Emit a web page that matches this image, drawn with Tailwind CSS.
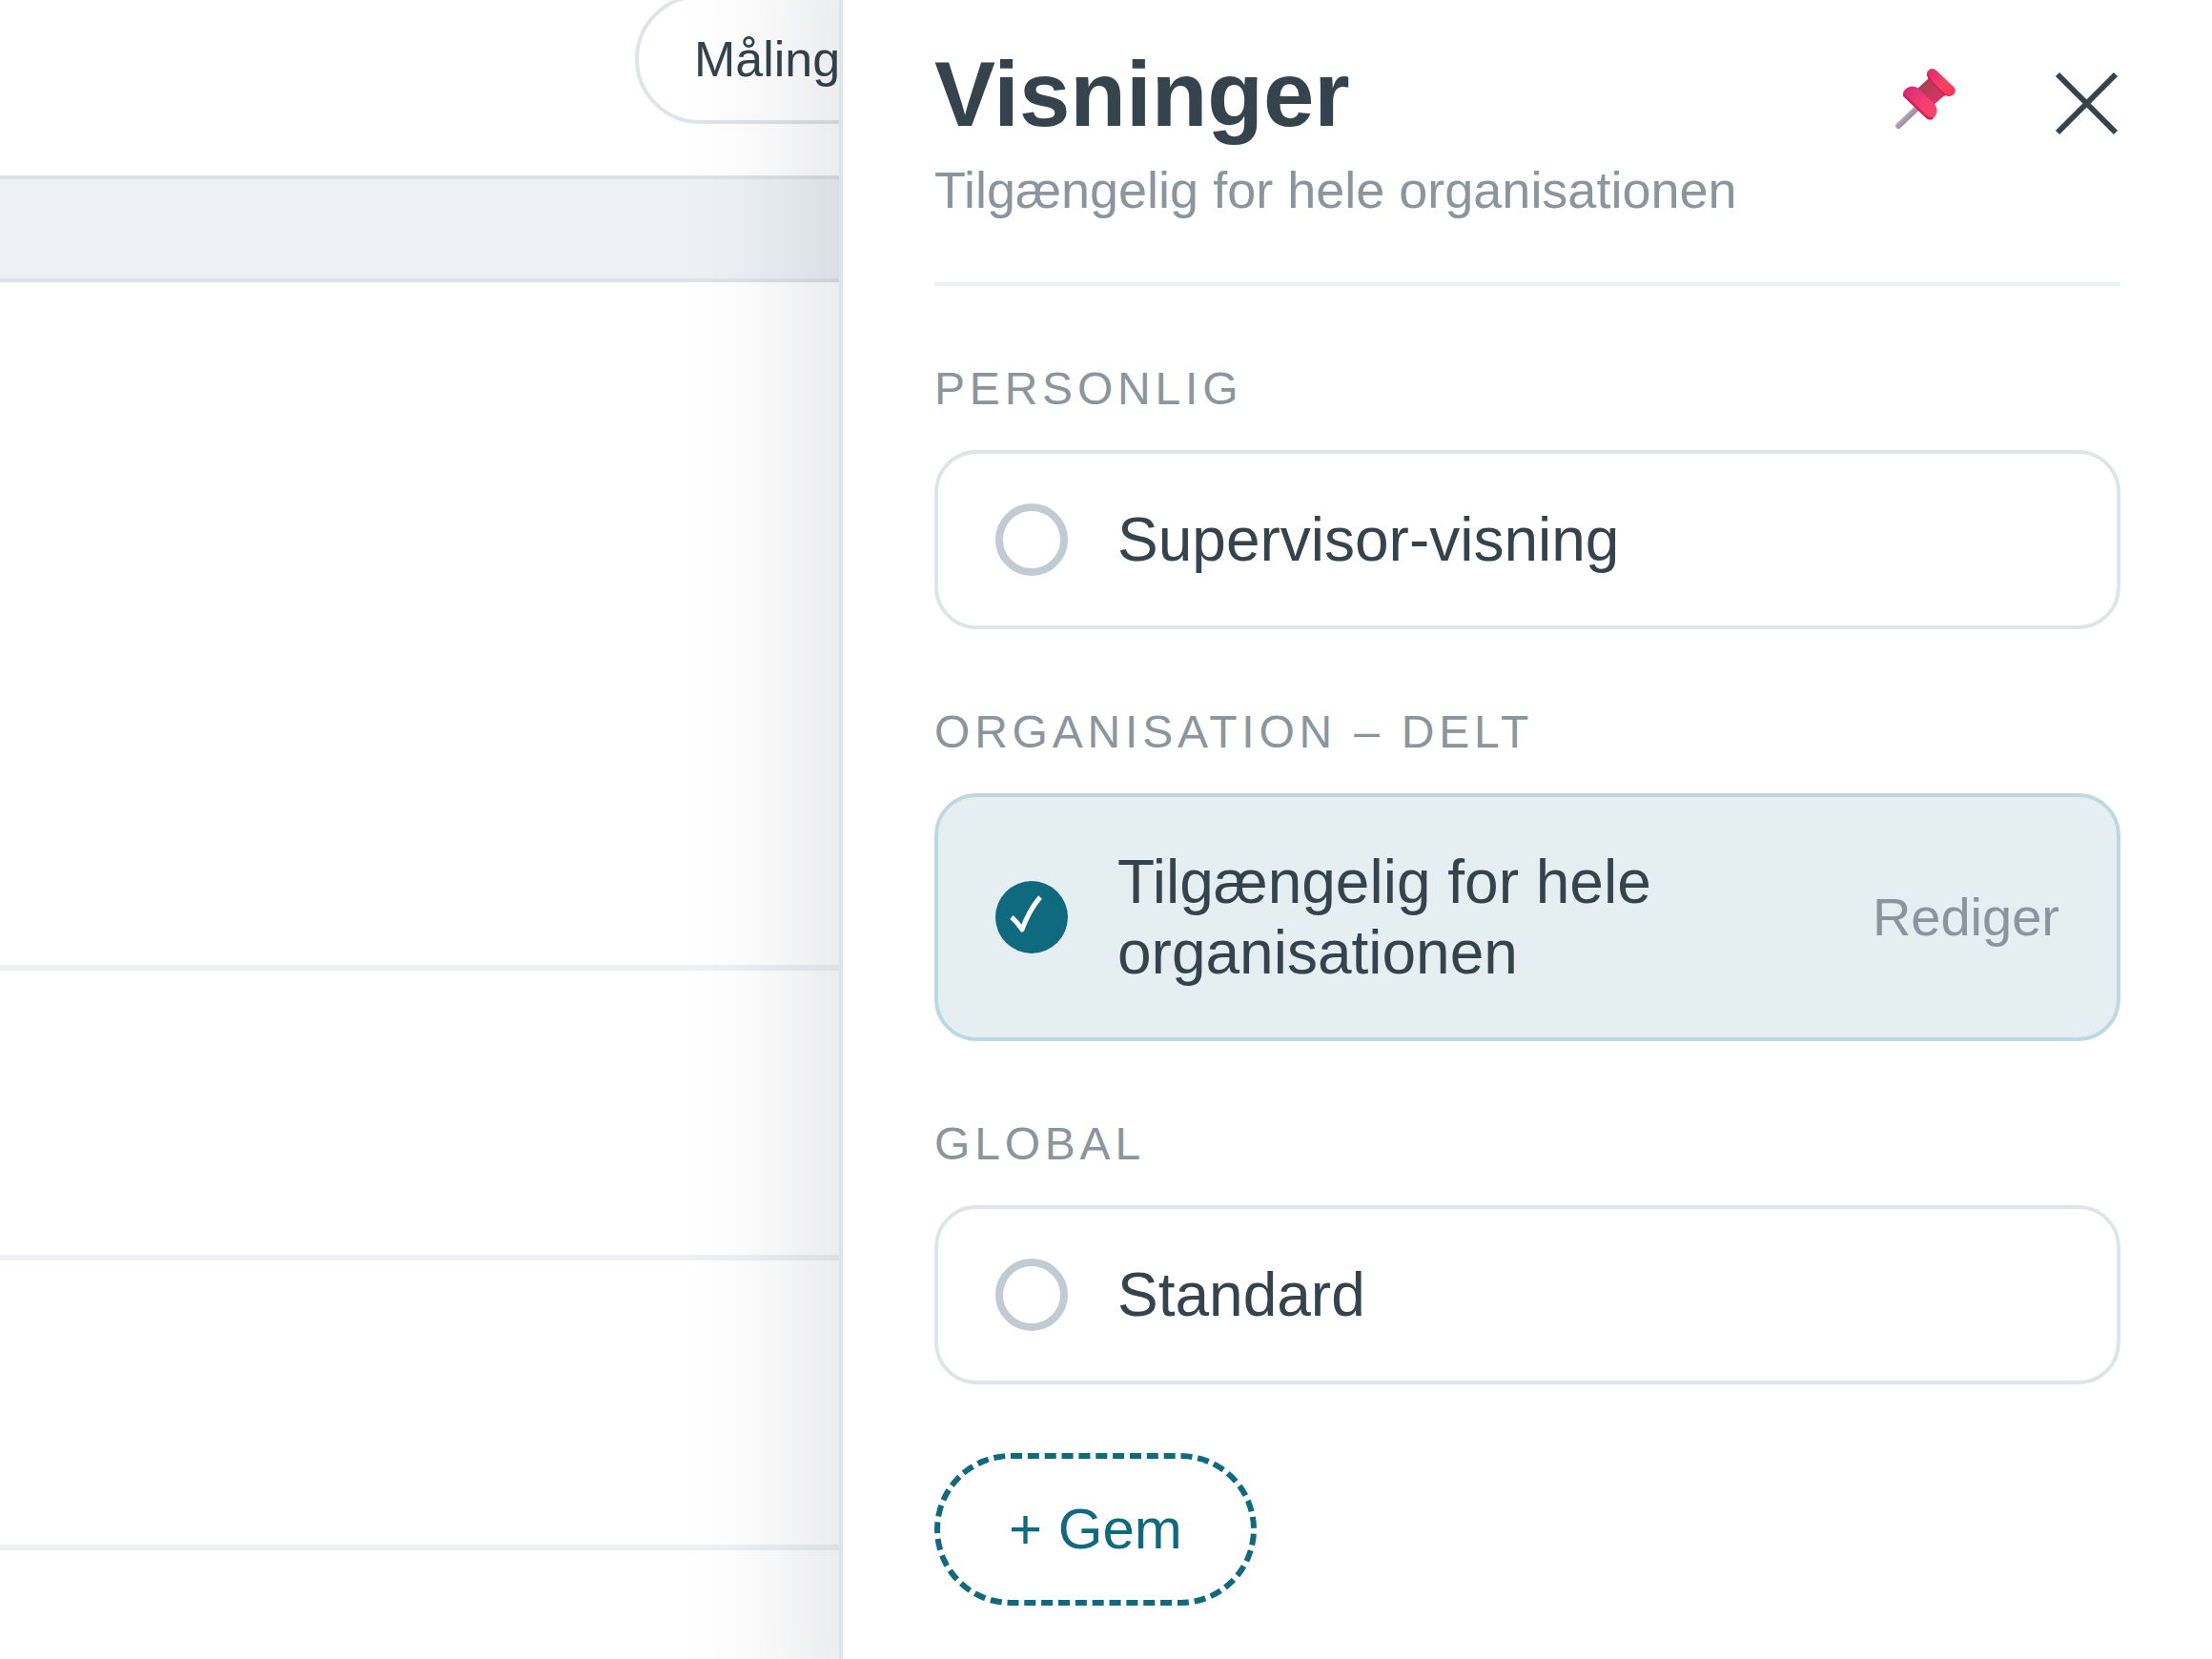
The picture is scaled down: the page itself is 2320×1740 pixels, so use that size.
<!DOCTYPE html>
<html lang="da">
<head>
  <meta charset="UTF-8" />
  <meta name="viewport" content="width=device-width, initial-scale=1.0" />
  <title>Visninger</title>
  <script src="https://cdn.jsdelivr.net/npm/@tailwindcss/browser@4"></script>
  <style>
    body {
      font-family: 'Liberation Sans', Arial, sans-serif;
    }
  </style>
</head>
<body class="bg-white text-[#35434c]">
  <div class="flex min-h-screen overflow-hidden">

    <!-- Page behind the panel -->
    <main class="flex-1 min-w-0 overflow-hidden">
      <div class="flex items-end h-[184px] pb-[54px] pl-[666px]">
        <button type="button" class="shrink-0 h-[136px] px-[58px] rounded-full border-4 border-[#dfe4e9] bg-white text-[52px] leading-[60px]">Måling</button>
      </div>
      <div class="h-28 border-y-4 border-[#dde2e7] bg-[#edf1f6]"></div>
      <div class="h-[722px] border-b-6 border-[#eff0f2]"></div>
      <div class="h-[304px] border-b-6 border-[#eff0f2]"></div>
      <div class="h-[304px] border-b-6 border-[#eff0f2]"></div>
    </main>

    <!-- Views panel -->
    <aside class="relative w-[1440px] shrink-0 px-24 pt-11 pb-14 border-l-4 border-[#dfe4ea] bg-white shadow-[60px_0_120px_100px_rgba(20,28,44,0.11)]">
      <header class="flex items-start justify-between pb-[66px] border-b-4 border-[#eef0f2]">
        <div>
          <h1 class="text-[96px] leading-[110px] font-bold">Visninger</h1>
          <p class="mt-3.5 text-[54px] leading-[62px] text-[#8b959d]">Tilgængelig for hele organisationen</p>
        </div>
        <div class="flex items-start gap-[100px] pt-7">
          <button type="button" aria-label="Fastgør">
            <svg class="w-16 h-16" viewBox="0 0 64 64" fill="none">
              <defs>
                <linearGradient id="needle" x1="9" y1="48" x2="15" y2="54" gradientUnits="userSpaceOnUse">
                  <stop stop-color="#b9b4b8" />
                  <stop offset="1" stop-color="#9585a0" />
                </linearGradient>
                <linearGradient id="neck" x1="28" y1="15" x2="47" y2="33" gradientUnits="userSpaceOnUse">
                  <stop stop-color="#a93f50" />
                  <stop offset="1" stop-color="#dc3166" />
                </linearGradient>
                <linearGradient id="cap" x1="34" y1="4" x2="60" y2="27" gradientUnits="userSpaceOnUse">
                  <stop stop-color="#e02b6c" />
                  <stop offset=".6" stop-color="#fb4465" />
                  <stop offset="1" stop-color="#ff2f55" />
                </linearGradient>
                <linearGradient id="flange" x1="12" y1="22" x2="40" y2="49" gradientUnits="userSpaceOnUse">
                  <stop stop-color="#d92a78" />
                  <stop offset=".5" stop-color="#f23c70" />
                  <stop offset="1" stop-color="#fc4668" />
                </linearGradient>
              </defs>
              <path d="M3 60 23 41" stroke="url(#needle)" stroke-width="6" stroke-linecap="round" />
              <path d="M35 10 23 21 40 38 53 27Z" fill="url(#neck)" />
              <path d="M34 2.500Q38-2 43 2L61 19Q64 22 62 26 58 31 52 28L36 12Q31 7 34 2.500Z" fill="url(#cap)" />
              <path d="M34 6Q35 11 39 15L52 28" stroke="#cf2457" stroke-width="2" />
              <path d="M10 22Q16 16 23 20L40 36Q46 42 42 49 38 56 33 52L10 30Q6 26 10 22Z" fill="url(#flange)" />
              <path d="M9 28 33 51Q35 53 38 52" stroke="#d91f57" stroke-width="2.500" stroke-linecap="round" />
            </svg>
          </button>
          <button type="button" aria-label="Luk">
            <svg class="w-[72px] h-[72px]" viewBox="0 0 72 72" fill="none" stroke="#35434c" stroke-width="6">
              <path d="M6 6 67 67M67 6 6 67" />
            </svg>
          </button>
        </div>
      </header>

      <h2 class="mt-20 mb-9 text-[48px] leading-[56px] tracking-widest uppercase text-[#8b959d]">Personlig</h2>
      <div class="flex items-center px-[60px] py-[52px] rounded-[44px] border-4 border-[#dfe4e9]">
        <input type="radio" name="view" id="view-supervisor" class="appearance-none shrink-0 size-19 rounded-full border-8 border-[#c3cbd2]" />
        <label for="view-supervisor" class="flex-1 ml-[52px] text-[64px] leading-[74px]">Supervisor-visning</label>
      </div>

      <h2 class="mt-20 mb-9 text-[48px] leading-[56px] tracking-widest uppercase text-[#8b959d]">Organisation – delt</h2>
      <div class="flex items-center px-[60px] py-[52px] rounded-[44px] border-4 border-[#bdd9e0] bg-[#e5eff2]">
        <span class="relative flex shrink-0">
          <input type="radio" name="view" id="view-org" checked class="appearance-none size-19 rounded-full bg-[#0f6a80]" />
          <svg class="absolute inset-0 size-19 pointer-events-none" viewBox="0 0 76 76" fill="none" stroke="#fff" stroke-width="5" stroke-linejoin="round">
            <path d="M17 38Q23 43 28 51 35 31 47 17" />
          </svg>
        </span>
        <label for="view-org" class="flex-1 ml-[52px] text-[64px] leading-[74px]">Tilgængelig for hele organisationen</label>
        <button type="button" class="ml-10 text-[56px] leading-[64px] text-[#8b959d]">Rediger</button>
      </div>

      <h2 class="mt-20 mb-9 text-[48px] leading-[56px] tracking-widest uppercase text-[#8b959d]">Global</h2>
      <div class="flex items-center px-[60px] py-[52px] rounded-[44px] border-4 border-[#dfe4e9]">
        <input type="radio" name="view" id="view-standard" class="appearance-none shrink-0 size-19 rounded-full border-8 border-[#c3cbd2]" />
        <label for="view-standard" class="flex-1 ml-[52px] text-[64px] leading-[74px]">Standard</label>
      </div>

      <button type="button" class="block mt-[72px] px-[72px] py-10 rounded-full border-6 border-dashed border-[#0f6a80] text-[60px] leading-[68px] text-[#0f6a80]">+ Gem</button>
    </aside>

  </div>
</body>
</html>
